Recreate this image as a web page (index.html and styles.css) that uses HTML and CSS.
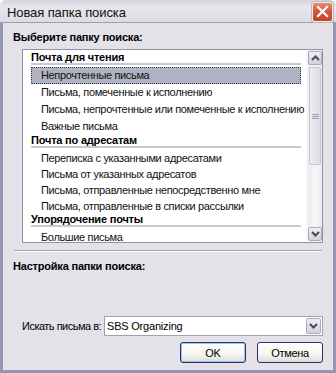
FILE: index.html
```html
<!DOCTYPE html>
<html lang="ru">
<head>
<meta charset="utf-8">
<title>Новая папка поиска</title>
<link rel="stylesheet" href="styles.css">
</head>
<body>
<div class="window">
  <div class="titlebar">
    <span class="title">Новая папка поиска</span>
    <div class="close-btn">
      <svg width="13" height="13" viewBox="0 0 13 13"><path d="M2 2 L11 11 M11 2 L2 11" stroke="#fff" stroke-width="2.2" stroke-linecap="square"/></svg>
    </div>
  </div>
  <div class="frame">
    <div class="heading">Выберите папку поиска:</div>
    <div class="listbox">
      <div class="list-content">
        <div class="group-title">Почта для чтения</div>
        <div class="item selected">Непрочтенные письма</div>
        <div class="item">Письма, помеченные к исполнению</div>
        <div class="item">Письма, непрочтенные или помеченные к исполнению</div>
        <div class="item">Важные письма</div>
        <div class="group-title">Почта по адресатам</div>
        <div class="item tight">Переписка с указанными адресатами</div>
        <div class="item tight">Письма от указанных адресатов</div>
        <div class="item tight">Письма, отправленные непосредственно мне</div>
        <div class="item tight">Письма, отправленные в списки рассылки</div>
        <div class="group-title">Упорядочение почты</div>
        <div class="item">Большие письма</div>
      </div>
      <div class="scrollbar">
        <div class="sb-btn">
          <svg width="9" height="6" viewBox="0 0 9 6"><path d="M1 5 L4.5 1.5 L8 5" fill="none" stroke="#4a4a52" stroke-width="2"/></svg>
        </div>
        <div class="sb-track">
          <div class="sb-thumb"><span class="grip"></span></div>
        </div>
        <div class="sb-btn">
          <svg width="9" height="6" viewBox="0 0 9 6"><path d="M1 1 L4.5 4.5 L8 1" fill="none" stroke="#4a4a52" stroke-width="2"/></svg>
        </div>
      </div>
    </div>
    <div class="separator"></div>
    <div class="heading heading-second">Настройка папки поиска:</div>
    <div class="spacer"></div>
    <div class="field-row">
      <span class="field-label">Искать письма в:</span>
      <div class="combo">
        <span class="combo-text">SBS Organizing</span>
        <div class="sb-btn combo-btn">
          <svg width="9" height="6" viewBox="0 0 9 6"><path d="M1 1 L4.5 4.5 L8 1" fill="none" stroke="#4a4a52" stroke-width="2"/></svg>
        </div>
      </div>
    </div>
    <div class="buttons">
      <div class="btn btn-default">OK</div>
      <div class="btn">Отмена</div>
    </div>
  </div>
</div>
</body>
</html>
```

FILE: styles.css
```css
* { box-sizing: border-box; }

html, body {
  margin: 0;
  padding: 0;
  background: #ffffff;
}

body {
  font-family: "Liberation Sans", Arial, sans-serif;
  font-size: 11px;
  color: #000;
}

.window {
  width: 336px;
  height: 373px;
  display: flex;
  flex-direction: column;
}

.titlebar {
  height: 23px;
  flex: none;
  display: flex;
  align-items: center;
  justify-content: space-between;
  padding: 0 3px 0 7px;
  background: linear-gradient(#d4d4dc 0%, #e6e6ec 30%, #dcdce3 100%);
  border-bottom: 1px solid #9a9db3;
  border-radius: 6px 6px 0 0;
}

.title {
  font-size: 13px;
  color: #111;
  letter-spacing: -0.1px;
  padding-top: 2px;
}

.close-btn {
  width: 21px;
  height: 20px;
  margin-top: 1px;
  border: 1px solid #f4ece8;
  border-radius: 3px;
  background: linear-gradient(#e88a7a 0%, #d9563f 45%, #c5402c 100%);
  display: flex;
  align-items: center;
  justify-content: center;
  box-shadow: 0 0 0 1px #b9b9c4;
}

.frame {
  flex: 1;
  display: flex;
  flex-direction: column;
  background: #e4e1e8;
  border: 3px solid #9396b0;
  border-top: 0;
  padding: 7px 10px 7px 10px;
}

.heading {
  font-weight: bold;
  line-height: 14px;
  height: 14px;
  letter-spacing: -0.2px;
}

.heading-second {
  margin-top: 7px;
}

.listbox {
  margin: 5px 0 0 9px;
  width: 301px;
  height: 194px;
  flex: none;
  border: 1px solid #8f93a8;
  background: #fff;
  display: flex;
  overflow: hidden;
}

.list-content {
  flex: 1;
  padding: 2px 5px 0 8px;
  overflow: hidden;
}

.group-title {
  font-weight: bold;
  line-height: 10px;
  padding-bottom: 1px;
  border-bottom: 2px solid #c9c9d2;
  margin-bottom: 2px;
  letter-spacing: -0.2px;
  white-space: nowrap;
}

.item {
  height: 17px;
  line-height: 15px;
  padding-left: 9px;
  border: 1px dotted transparent;
  white-space: nowrap;
  letter-spacing: -0.35px;
  color: #111;
}

.item.tight {
  height: 16px;
  line-height: 14px;
}

.item.selected {
  background: #b0b1c3;
  border-color: #3c3c46;
}

.scrollbar {
  width: 16px;
  flex: none;
  display: flex;
  flex-direction: column;
  padding: 1px 0 1px 1px;
  background: #f3f3f6;
  border-left: 1px solid #f8f8fa;
}

.sb-btn {
  height: 14px;
  flex: none;
  display: flex;
  align-items: center;
  justify-content: center;
  border: 1px solid #a9abbd;
  border-radius: 2px;
  background: linear-gradient(#eeeef4, #cfd1de);
}

.sb-track {
  flex: 1;
  padding: 2px 0 0 0;
  background: linear-gradient(90deg, #ececf0, #f7f7f9 50%, #ececf0);
}

.sb-thumb {
  height: 98px;
  margin: 0 1px;
  border: 1px solid #c4c6d4;
  border-radius: 2px;
  background: linear-gradient(90deg, #eeeff4, #dcdde6);
  display: flex;
  align-items: center;
  justify-content: center;
}

.grip {
  width: 7px;
  height: 5px;
  border-top: 1px solid #9a9caf;
  border-bottom: 1px solid #9a9caf;
}

.grip::after {
  content: "";
  display: block;
  margin-top: 1px;
  border-top: 1px solid #9a9caf;
}

.separator {
  margin: 7px 0 0 1px;
  width: 308px;
  height: 2px;
  border-top: 1px solid #a2a3b4;
  border-bottom: 1px solid #ffffff;
}

.spacer {
  flex: 1;
}

.field-row {
  height: 20px;
  display: flex;
  align-items: center;
  padding-left: 9px;
}

.field-label {
  width: 82px;
  flex: none;
  white-space: nowrap;
  letter-spacing: -0.5px;
}

.combo {
  flex: 1;
  height: 20px;
  border: 1px solid #9fa2b6;
  background: #fff;
  display: flex;
  align-items: center;
  justify-content: space-between;
  padding: 1px 1px 1px 2px;
}

.combo-text {
  letter-spacing: -0.2px;
}

.combo-btn {
  width: 15px;
  height: 16px;
}

.buttons {
  margin-top: 6px;
  height: 21px;
  display: flex;
  justify-content: flex-end;
  gap: 11px;
}

.btn {
  width: 66px;
  height: 21px;
  border: 1px solid #1f3569;
  border-radius: 3px;
  background: linear-gradient(#ffffff 0%, #f6f5f1 60%, #dedcd4 100%);
  display: flex;
  align-items: center;
  justify-content: center;
  letter-spacing: -0.3px;
}

.btn-default {
  box-shadow: inset 0 0 0 1px #a6c2ec;
}
```
